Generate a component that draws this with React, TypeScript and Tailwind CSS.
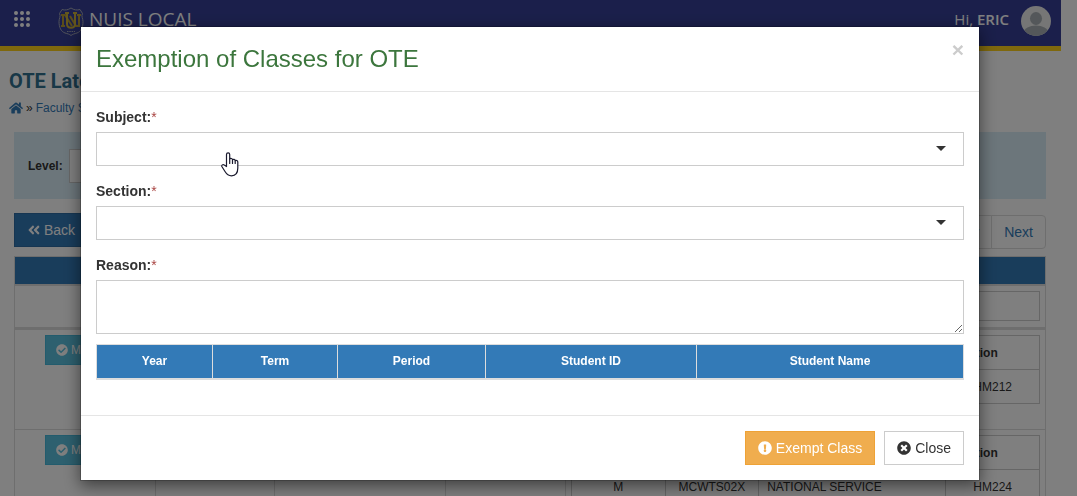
import React from 'react';
import {
  FaAngleDoubleLeft,
  FaCheckCircle,
  FaExclamationCircle,
  FaHome,
  FaTimesCircle,
} from 'react-icons/fa';

const students = [
  { code: 'MCWTS02X', description: 'NATIONAL SERVICE', section: 'HM212' },
  { code: 'MCWTS02X', description: 'NATIONAL SERVICE', section: 'HM224' },
];

function Logo() {
  return (
    <svg
      className="h-[30px] w-[26px]"
      viewBox="0 0 26 30"
      fill="none"
      aria-hidden="true"
    >
      <path
        d="M13 1c3 2 6 2.500 9 1.500l2.500 4c-1.500 3 .5 5 .5 8 0 6-2 10-6 11.500-2.500.7-4.500 1.200-6 2.500-1.500-1.300-3.500-1.800-6-2.500C3 24.500 1 20.500 1 14.500c0-3 2-5 .5-8L4 2.500C7 3.500 10 3 13 1z"
        stroke="#a2a5b5"
        strokeWidth="1"
      />
      <path
        d="M3 8h4l7 11M5 8v11M3 19h4M21 8v11h-3L12 9M19 8h4"
        stroke="#b59b35"
        strokeWidth="2"
      />
      <path
        d="M9 6v11c0 5 8 5 8 0V6M7 6h4M15 6h4"
        stroke="#c9ae38"
        strokeWidth="2"
      />
      <path d="M9 24.500h8" stroke="#a2a5b5" strokeDasharray="1.500 .8" />
    </svg>
  );
}

function NavBar() {
  return (
    <div className="flex h-[51px] items-start justify-between border-b-5 border-[#ffd11a] bg-[#363f96] pl-3.5 pr-2.5 font-['Open_Sans',sans-serif] text-white">
      <div className="flex items-center">
        <button type="button" aria-label="Menu" className="mt-px">
          <svg className="h-4 w-4" viewBox="0 0 16 16" fill="currentColor">
            {[2, 8, 14].map((y) =>
              [2, 8, 14].map((x) => (
                <circle key={`${x}-${y}`} cx={x} cy={y} r="2" />
              ))
            )}
          </svg>
        </button>
        <div className="ml-7 mt-[7px] flex items-center">
          <Logo />
          <span className="ml-[5px] -mt-1.5 text-[19px] leading-6">
            NUIS LOCAL
          </span>
        </div>
      </div>
      <div className="flex items-center pt-1.5">
        <span className="-mt-1 text-[15px] leading-6">
          Hi, <b className="font-semibold">ERIC</b>
        </span>
        <svg className="ml-3 h-[30px] w-[30px]" viewBox="0 0 30 30">
          <clipPath id="avatar">
            <circle cx="15" cy="15" r="15" />
          </clipPath>
          <g clipPath="url(#avatar)">
            <rect width="30" height="30" fill="#ececec" />
            <ellipse cx="15" cy="12.500" rx="6" ry="6.500" fill="#a8afb4" />
            <ellipse cx="15" cy="26" rx="12" ry="6.500" fill="#a8afb4" />
          </g>
        </svg>
      </div>
    </div>
  );
}

function StudentsTable() {
  return (
    <table className="mt-2 w-full table-fixed border-collapse text-xs">
      <colgroup>
        <col className="w-[141px]" />
        <col className="w-[119px]" />
        <col className="w-[171px]" />
        <col className="w-[120px]" />
        <col />
      </colgroup>
      <thead>
        <tr className="h-7 bg-[#337ab7]">
          <th className="border border-b-2 border-[#ddd]" colSpan={5} />
        </tr>
        <tr className="h-11">
          <td className="border border-b-3 border-[#ddd]" />
          <td className="border border-b-3 border-[#ddd]" />
          <td className="border border-b-3 border-[#ddd]" />
          <td className="border border-b-3 border-[#ddd]" />
          <td className="border border-b-3 border-[#ddd] px-[5px]">
            <input
              type="text"
              aria-label="Filter"
              className="block h-[30px] w-full border border-[#ccc]"
            />
          </td>
        </tr>
      </thead>
      <tbody>
        {students.map((student) => (
          <tr key={student.section} className="h-[101px] align-top">
            <td className="border border-[#ddd] pt-[5px] text-center">
              <button
                type="button"
                className="inline-flex h-[30px] w-20 items-center gap-[3px] border border-[#46b8da] bg-[#5bc0de] px-2.5 text-white"
              >
                <FaCheckCircle />
                Mark
              </button>
            </td>
            <td className="border border-[#ddd]" />
            <td className="border border-[#ddd]" />
            <td className="border border-[#ddd]" />
            <td className="border border-[#ddd] p-[5px]">
              <table className="w-full table-fixed border-collapse">
                <thead>
                  <tr className="h-[34px] text-left">
                    <th className="w-1/5 border border-[#ccc] px-2">Type</th>
                    <th className="w-1/5 border border-[#ccc] px-2">Subject</th>
                    <th className="w-2/5 border border-[#ccc] px-2">
                      Description
                    </th>
                    <th className="w-1/5 border border-[#ccc] px-2">Section</th>
                  </tr>
                </thead>
                <tbody>
                  <tr className="h-[34px] text-center">
                    <td className="border border-[#ccc]">M</td>
                    <td className="border border-[#ccc]">{student.code}</td>
                    <td className="border border-[#ccc] px-2 text-left">
                      {student.description}
                    </td>
                    <td className="border border-[#ccc]">{student.section}</td>
                  </tr>
                </tbody>
              </table>
            </td>
          </tr>
        ))}
      </tbody>
    </table>
  );
}

function SelectField({ id, label }: { id: string; label: string }) {
  return (
    <div className="mb-[15px]">
      <label htmlFor={id} className="mb-[5px] block font-bold">
        {label}:<span className="font-normal text-[#a94442]">*</span>
      </label>
      <div className="relative">
        <select
          id={id}
          className="block h-[34px] w-full appearance-none border border-[#ccc] bg-white px-3"
        />
        <svg
          className="pointer-events-none absolute right-[18px] top-3.5 h-[5px] w-2.5"
          viewBox="0 0 10 5"
          fill="#333"
        >
          <path d="M0 0h10L5 5z" />
        </svg>
      </div>
    </div>
  );
}

function ExemptionModal() {
  return (
    <div className="fixed inset-0 overflow-hidden bg-black/50 pr-[17px]">
      <div
        role="dialog"
        aria-labelledby="exemption-title"
        className="relative mx-auto mt-[26px] max-w-[900px] border border-black/20 bg-white bg-clip-padding shadow-[0_5px_15px_rgba(0,0,0,0.5)]"
      >
        <div className="flex items-start justify-between border-b border-[#e5e5e5] p-[15px]">
          <h4
            id="exemption-title"
            className="text-2xl leading-[34px] text-[#3c763d]"
          >
            Exemption of Classes for OTE
          </h4>
          <button
            type="button"
            aria-label="Close dialog"
            className="text-[21px] leading-4 font-bold text-[#ccc]"
          >
            ×
          </button>
        </div>
        <div className="px-[15px] pt-[15px] pb-[35px]">
          <SelectField id="subject" label="Subject" />
          <SelectField id="section" label="Section" />
          <label htmlFor="reason" className="mb-[5px] block font-bold">
            Reason:<span className="font-normal text-[#a94442]">*</span>
          </label>
          <textarea
            id="reason"
            className="mb-2.5 block h-[54px] w-full border border-[#ccc] px-3 py-1.5"
          />
          <table className="w-full table-fixed border-collapse text-xs">
            <thead>
              <tr className="h-[34px] bg-[#337ab7] text-white">
                <th className="w-[116px] border border-b-2 border-[#ddd]">
                  Year
                </th>
                <th className="w-[125px] border border-b-2 border-[#ddd]">
                  Term
                </th>
                <th className="w-[148px] border border-b-2 border-[#ddd]">
                  Period
                </th>
                <th className="w-[211px] border border-b-2 border-[#ddd]">
                  Student ID
                </th>
                <th className="border border-b-2 border-[#ddd]">
                  Student Name
                </th>
              </tr>
            </thead>
          </table>
        </div>
        <div className="flex justify-end gap-[9px] border-t border-[#e5e5e5] p-[15px]">
          <button
            type="button"
            className="flex h-[34px] items-center gap-1 border border-[#eea236] bg-[#f0ad4e] px-3 text-white"
          >
            <FaExclamationCircle />
            Exempt Class
          </button>
          <button
            type="button"
            className="flex h-[34px] items-center gap-1 border border-[#ccc] bg-white px-3"
          >
            <FaTimesCircle />
            Close
          </button>
        </div>
        {/* hand pointer over the subject field */}
        <svg
          className="pointer-events-none absolute left-[140px] top-[125px] h-[25px] w-[18px]"
          viewBox="0 0 18 25"
          fill="#fff"
          stroke="#1a1a2e"
          strokeWidth="1.2"
          strokeLinejoin="round"
          strokeLinecap="round"
        >
          <path d="M5.500 14.500V2.500c0-2.200 3.200-2.200 3.200 0V7c.8-1 2.600-.6 2.800.7.900-.8 2.500-.3 2.700.9.900-.6 2.600 0 2.600 1.500V16c0 5-2.500 7.800-6.300 7.800-3.500 0-5-1.800-6.500-4.300L1 14.800c-.9-1.600 1-2.900 2.300-1.800z" />
          <path d="M8.700 7v4.500M11.500 8v3.500M14.200 9v2.500" />
        </svg>
      </div>
    </div>
  );
}

export default function App() {
  return (
    <div className="h-screen overflow-hidden bg-white pr-4 font-['Liberation_Sans',Arial,sans-serif] text-sm leading-5 text-[#333]">
      <NavBar />
      <div className="pt-4 pr-[15px] pl-3.5">
        <h1 className="-ml-[5px] font-['Roboto',sans-serif] text-xl leading-7 font-bold text-[#31708f]">
          OTE Latest Attendance
        </h1>
        <div className="mt-[3px] -ml-[5px] flex h-5 items-center gap-[3px] text-xs text-[#337ab7]">
          <a href="#home" aria-label="Home">
            <FaHome className="h-3.5 w-3.5" />
          </a>
          <span className="text-[#333]">»</span>
          <a href="#faculty">Faculty Services</a>
        </div>
        <div className="mt-3.5 flex h-[67px] items-center bg-[#d9edf7] px-3.5">
          <label htmlFor="level" className="text-xs font-bold">
            Level:
          </label>
          <select
            id="level"
            className="ml-1.5 h-[34px] w-60 appearance-none border border-[#ccc] bg-white"
          />
        </div>
        <div className="mt-3.5 flex h-[35px] items-start justify-between">
          <button
            type="button"
            className="flex h-[34px] items-center gap-[3px] border border-[#2e6da4] bg-[#337ab7] px-3 text-white"
          >
            <FaAngleDoubleLeft />
            Back
          </button>
          <div className="mt-0.5 flex text-[#337ab7]">
            <a href="#prev" className="rounded-l border border-[#ddd] px-3 py-1.5">
              Prev
            </a>
            <a
              href="#next"
              className="-ml-px rounded-r border border-[#ddd] px-3 py-1.5"
            >
              Next
            </a>
          </div>
        </div>
        <StudentsTable />
      </div>
      <ExemptionModal />
    </div>
  );
}
